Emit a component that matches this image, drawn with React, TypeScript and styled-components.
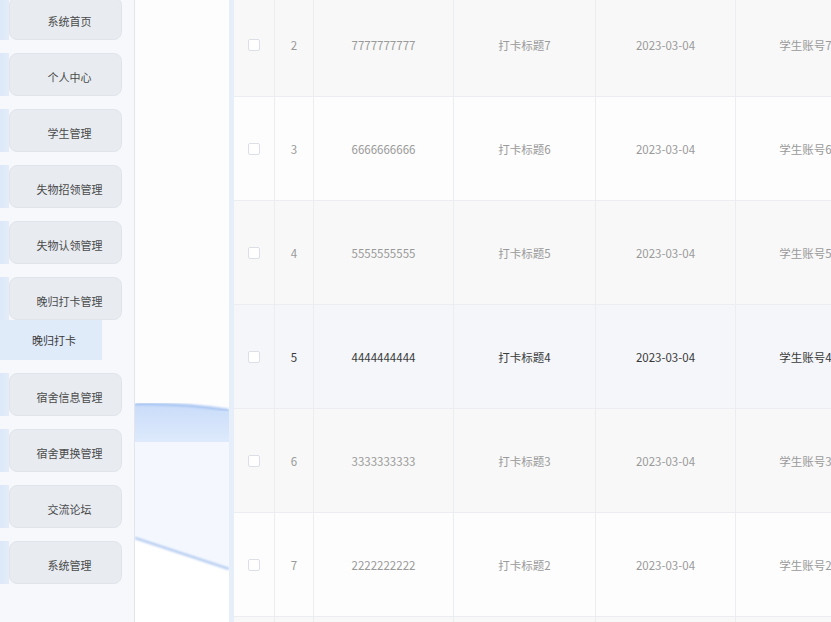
import React from 'react';
import styled, { createGlobalStyle } from 'styled-components';

const GlobalStyle = createGlobalStyle`
  html, body {
    margin: 0;
    padding: 0;
    background: #ffffff;
    overflow: hidden;
    font-family: "Noto Sans CJK SC", "Noto Sans", sans-serif;
  }
`;

const menu = [
  '系统首页',
  '个人中心',
  '学生管理',
  '失物招领管理',
  '失物认领管理',
  '晚归打卡管理',
  '宿舍信息管理',
  '宿舍更换管理',
  '交流论坛',
  '系统管理',
];

const rows = [
  { idx: 2, no: '7777777777' },
  { idx: 3, no: '6666666666' },
  { idx: 4, no: '5555555555' },
  { idx: 5, no: '4444444444' },
  { idx: 6, no: '3333333333' },
  { idx: 7, no: '2222222222' },
];

const App = () => {
  return (
    <>
      <GlobalStyle />
      <Layout>
        <Sidebar>
          <MenuList>
            {menu.map((name) => (
              <React.Fragment key={name}>
                <MenuRow>
                  <MenuButton>{name}</MenuButton>
                </MenuRow>
                {name === '晚归打卡管理' && <SubItem>晚归打卡</SubItem>}
              </React.Fragment>
            ))}
          </MenuList>
        </Sidebar>
        <Main>
          <Decor>
            <svg width="94" height="622" viewBox="0 0 94 622">
              <defs>
                <linearGradient id="band" x1="0" y1="0" x2="0" y2="1">
                  <stop offset="0" stopColor="#c9dcf9" />
                  <stop offset="1" stopColor="#deeafc" />
                </linearGradient>
                <filter id="soft">
                  <feGaussianBlur stdDeviation="0.8" />
                </filter>
              </defs>
              <rect x="0" y="442" width="94" height="130" fill="#f4f8fe" />
              <path d="M0 404 Q47 403 94 410 L94 442 L0 442 Z" fill="url(#band)" />
              <path d="M0 404 Q47 403 94 410" stroke="#9ebef0" strokeWidth="2" fill="none" filter="url(#soft)" />
              <path d="M0 538 L94 569 L94 622 L0 622 Z" fill="#ffffff" />
              <path d="M0 538 L94 569" stroke="#a7c2ee" strokeWidth="2" fill="none" filter="url(#soft)" />
            </svg>
          </Decor>
          <TableWrap>
            {rows.map((r) => (
              <Row key={r.idx} $tone={r.idx === 5 ? 'hover' : r.idx % 2 === 0 ? 'stripe' : 'plain'}>
                <Cell>
                  <Check />
                </Cell>
                <Cell>{r.idx}</Cell>
                <Cell>{r.no}</Cell>
                <Cell>打卡标题{r.no[0]}</Cell>
                <Cell>2023-03-04</Cell>
                <Cell>学生账号{r.no[0]}</Cell>
              </Row>
            ))}
            <Row $tone="stripe">
              <Cell />
              <Cell />
              <Cell />
              <Cell />
              <Cell />
              <Cell />
            </Row>
          </TableWrap>
        </Main>
      </Layout>
    </>
  );
};
export default App;

const Layout = styled.div`
  display: flex;
  height: 622px;
  overflow: hidden;
`;

const Sidebar = styled.aside`
  width: 134px;
  flex: none;
  background: #f6f8fb;
  border-right: 1px solid #e2e6ec;
  box-shadow: 1px 0 3px rgba(0, 0, 0, 0.04);
  overflow: hidden;
`;

const MenuList = styled.div`
  display: flex;
  flex-direction: column;
  gap: 13px;
  margin-top: -3px;
`;

const MenuRow = styled.div`
  display: flex;
  padding-left: 9px;
  background: linear-gradient(to right, #dce8f8 0, #e3ecf9 9px, transparent 9px);
`;

const MenuButton = styled.div`
  width: 113px;
  height: 43px;
  box-sizing: border-box;
  display: flex;
  align-items: center;
  justify-content: center;
  padding: 4px 0 0 8px;
  background: #e8ecf1;
  border: 1px solid #e1e5eb;
  border-radius: 8px;
  font-size: 11px;
  color: #4a4a4a;
`;

const SubItem = styled.div`
  width: 102px;
  height: 40px;
  margin-top: -13px;
  box-sizing: border-box;
  display: flex;
  align-items: center;
  padding-left: 32px;
  background: #e0ebfa;
  font-size: 11px;
  color: #3a3a3a;
`;

const Main = styled.main`
  flex: 1;
  display: flex;
  min-width: 0;
  overflow: hidden;
`;

const Decor = styled.div`
  width: 94px;
  flex: none;
  background: #fdfdfe;
  svg {
    display: block;
  }
`;

const TableWrap = styled.div`
  flex: 1;
  border-left: 5px solid #e6eefa;
  margin-top: -7px;
  overflow: hidden;
`;

const Row = styled.div<{ $tone: 'stripe' | 'plain' | 'hover' }>`
  display: grid;
  grid-template-columns: 41px 39px 140px 142px 140px 140px;
  height: 104px;
  box-sizing: border-box;
  border-bottom: 1px solid #ebedf0;
  background: ${(p) => (p.$tone === 'stripe' ? '#f8f8f8' : p.$tone === 'hover' ? '#f4f6f9' : '#fdfdfd')};
  color: ${(p) => (p.$tone === 'hover' ? '#3a3a3a' : '#9a9a9a')};
`;

const Cell = styled.div`
  display: flex;
  align-items: center;
  justify-content: center;
  border-right: 1px solid #ebedf0;
  font-size: 11.5px;
  white-space: nowrap;
  overflow: visible;
`;

const Check = styled.span`
  width: 12px;
  height: 12px;
  box-sizing: border-box;
  border: 1px solid #dcdfe6;
  border-radius: 2px;
  background: #ffffff;
`;
